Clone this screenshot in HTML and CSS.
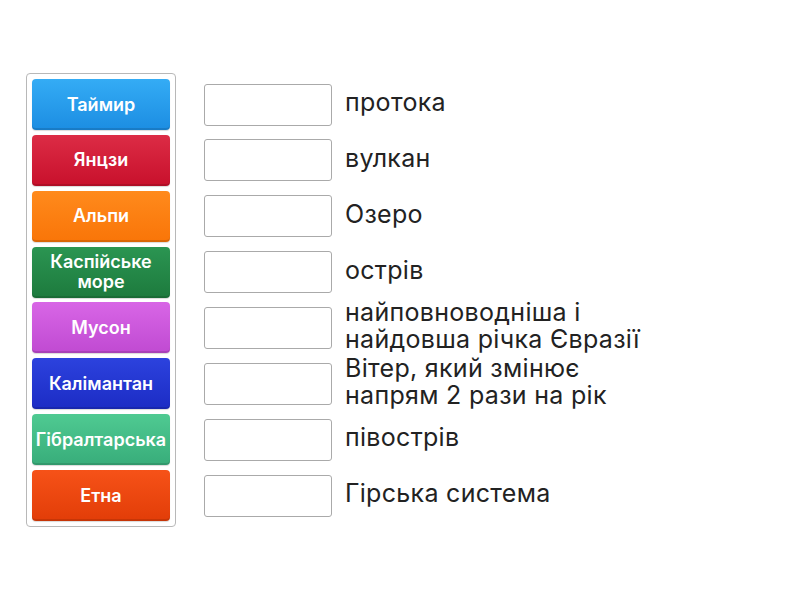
FILE: index.html
```html
<!DOCTYPE html>
<html lang="uk">
<head>
<meta charset="utf-8">
<title>Match</title>
<link rel="stylesheet" href="styles.css">
</head>
<body>
<div class="game">
  <div class="bank">
    <div class="tile t-blue">Таймир</div>
    <div class="tile t-red">Янцзи</div>
    <div class="tile t-orange">Альпи</div>
    <div class="tile t-green">Каспійське море</div>
    <div class="tile t-purple">Мусон</div>
    <div class="tile t-indigo">Калімантан</div>
    <div class="tile t-mint">Гібралтарська</div>
    <div class="tile t-fire">Етна</div>
  </div>
  <div class="targets">
    <div class="row"><div class="slot"></div><div class="label">протока</div></div>
    <div class="row"><div class="slot"></div><div class="label">вулкан</div></div>
    <div class="row"><div class="slot"></div><div class="label">Озеро</div></div>
    <div class="row"><div class="slot"></div><div class="label">острів</div></div>
    <div class="row"><div class="slot"></div><div class="label">найповноводніша і найдовша річка Євразії</div></div>
    <div class="row"><div class="slot"></div><div class="label">Вітер, який змінює напрям 2 рази на рік</div></div>
    <div class="row"><div class="slot"></div><div class="label">півострів</div></div>
    <div class="row"><div class="slot"></div><div class="label">Гірська система</div></div>
  </div>
</div>
</body>
</html>
```
FILE: styles.css
```css
html, body {
  margin: 0;
  padding: 0;
  background: #fff;
}
body {
  font-family: Inter, "Noto Sans", sans-serif;
  color: #222;
}
.game {
  display: flex;
  align-items: flex-start;
  padding: 73px 0 0 26px;
  gap: 28px;
}
.bank {
  width: 138px;
  padding: 5px;
  border: 1px solid #b8b8b8;
  border-radius: 4px;
  display: grid;
  grid-auto-rows: 51px;
  row-gap: 4.86px;
}
.tile {
  display: flex;
  align-items: center;
  justify-content: center;
  text-align: center;
  color: #fff;
  font-weight: 600;
  font-size: 18px;
  line-height: 20px;
  border-radius: 4px;
  padding: 0 1px;
  box-shadow: inset 0 -2px 0 rgba(0,0,0,0.12), 0 1px 1px rgba(0,0,0,0.15);
}
.t-blue   { background: linear-gradient(#34acf5, #1c8de2); }
.t-red    { background: linear-gradient(#dc2c45, #c8102c); }
.t-orange { background: linear-gradient(#ff8a1c, #f97508); }
.t-green  { background: linear-gradient(#2b9552, #1d7a3d); }
.t-purple { background: linear-gradient(#d866e6, #c04ad2); }
.t-indigo { background: linear-gradient(#2c42de, #1c2cc4); }
.t-mint   { background: linear-gradient(#4fca92, #38ad7a); }
.t-fire   { background: linear-gradient(#f65218, #e23d08); }
.targets {
  padding-top: 6px;
  display: grid;
  grid-auto-rows: 51px;
  row-gap: 4.86px;
}
.row {
  display: flex;
  align-items: center;
  gap: 13px;
}
.slot {
  flex: none;
  width: 126px;
  height: 40px;
  border: 1px solid #aaa;
  border-radius: 3px;
  background: #fff;
}
.label {
  font-size: 25px;
  letter-spacing: 0.3px;
  line-height: 27px;
  color: #222;
  width: 310px;
  margin-top: -4px;
}
```
